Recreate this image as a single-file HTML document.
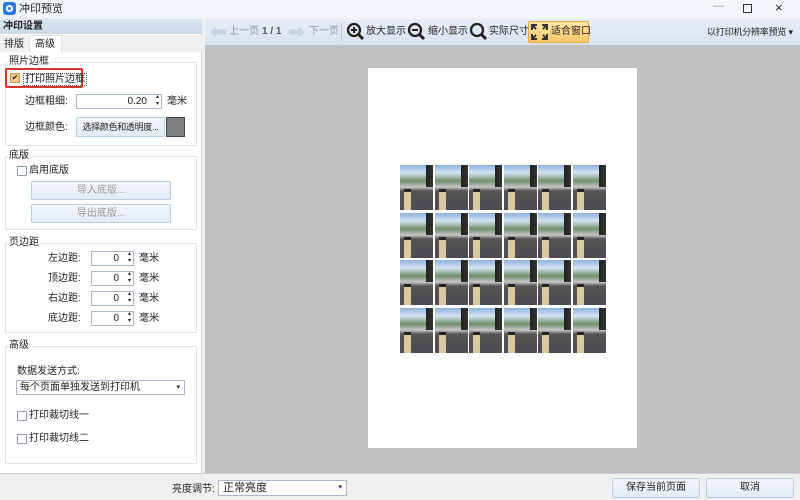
<!DOCTYPE html>
<html><head><meta charset="utf-8"><style>
*{margin:0;padding:0;box-sizing:border-box;white-space:nowrap}
body{width:800px;height:500px;overflow:hidden;background:#f0f0f0;font-family:"Liberation Sans","Noto Sans CJK SC",sans-serif;font-size:10px;line-height:12px;color:#222;position:relative}
.a{position:absolute}
.grp{position:absolute;border:1px solid #dde3ea;border-radius:2px}
.gl{position:absolute;top:-7px;left:8px;background:#fff;padding:0 1px;font-size:10px}
.cb{position:absolute;width:10px;height:10px;border:1px solid #8a9bb0;background:#fff;border-radius:1px}
.in{position:absolute;height:15px;border:1px solid #a9b8cc;background:#fff;text-align:right;font-size:10px;line-height:13px;padding-right:14px}
.in:after{content:"▴\A▾";white-space:pre;position:absolute;right:2px;top:-1px;font-size:6px;line-height:7px}
.btn{position:absolute;border:1px solid #b9cde3;background:linear-gradient(#f3f7fc,#e2ebf6);border-radius:2px;text-align:center;font-size:10px}
.ph{position:absolute;width:33px;height:45px;background:
linear-gradient(90deg,transparent 0,transparent 26px,#222 26px,#333 33px) 0 0/33px 22px no-repeat,
linear-gradient(180deg,#8fb2da 0,#d4e3f2 8px,#6f8f6a 16px,#c8c8c8 22px,#555 26px,#4b4b52 45px);}
.ph:after{content:"";position:absolute;left:4px;top:24px;width:7px;height:18px;background:#d8c9a2;border-top:3px solid #2a2420}
</style></head><body>
<div class="a" style="left:0;top:0;width:800px;height:18px;background:#f4f7fa"></div>
<div class="a" style="left:3px;top:2px;width:13px;height:13px;background:#2c7be5;border-radius:3px"><div class="a" style="left:3px;top:3px;width:7px;height:7px;border:2px solid #fff;border-radius:50%"></div></div>
<div class="a" style="left:19px;top:3px;font-size:11px">冲印预览</div>
<div class="a" style="left:713px;top:0;font-size:11px;color:#999">—</div>
<div class="a" style="left:743px;top:4px;width:9px;height:9px;border:1px solid #333"></div>
<div class="a" style="left:775px;top:0;font-size:13px;line-height:16px">×</div>
<div class="a" style="left:0;top:19px;width:202px;height:455px;background:#fff;border-right:1px solid #cfd8e3"></div>
<div class="a" style="left:0;top:19px;width:202px;height:15px;background:linear-gradient(#dbe6f2,#cbdaeb);font-weight:bold;font-size:10px;padding:2px 0 0 3px">冲印设置</div>
<div class="a" style="left:0;top:35px;width:202px;height:17px;background:#f0f0f0"></div>
<div class="a" style="left:4px;top:39px">排版</div>
<div class="a" style="left:29px;top:35px;width:33px;height:18px;background:#fff;border:1px solid #dde3ea;border-bottom:none;padding:3px 0 0 5px">高级</div>
<div class="grp" style="left:5px;top:62px;width:192px;height:84px"><span class="gl" style="left:2px">照片边框</span></div>
<div class="a" style="left:5px;top:68px;width:78px;height:20px;border:2px solid #d9342b;border-radius:2px"></div>
<div class="cb" style="left:10px;top:73px;background:#f6c98a;border-color:#c89b5a;font-size:8px;line-height:8px;text-align:center">✔</div>
<div class="a" style="left:23px;top:73px;border:1px dotted #555;padding:0 1px;line-height:11px">打印照片边框</div>
<div class="a" style="left:25px;top:96px">边框粗细:</div>
<div class="in" style="left:76px;top:94px;width:86px">0.20</div>
<div class="a" style="left:167px;top:96px">毫米</div>
<div class="a" style="left:25px;top:122px">边框颜色:</div>
<div class="btn" style="left:76px;top:117px;width:89px;height:20px;line-height:18px;font-size:9px;letter-spacing:-0.3px">选择颜色和透明度...</div>
<div class="a" style="left:166px;top:117px;width:19px;height:20px;background:#7f7f7f;border:1px solid #444"></div>
<div class="grp" style="left:5px;top:156px;width:192px;height:74px"><span class="gl" style="left:2px">底版</span></div>
<div class="cb" style="left:17px;top:166px"></div>
<div class="a" style="left:29px;top:165px">启用底版</div>
<div class="btn" style="left:31px;top:181px;width:140px;height:19px;line-height:17px;color:#999">导入底版...</div>
<div class="btn" style="left:31px;top:204px;width:140px;height:19px;line-height:17px;color:#999">导出底版...</div>
<div class="grp" style="left:5px;top:243px;width:192px;height:90px"><span class="gl" style="left:2px">页边距</span></div>
<div class="a" style="left:48px;top:253px">左边距:</div><div class="in" style="left:91px;top:251px;width:43px">0</div><div class="a" style="left:139px;top:253px">毫米</div>
<div class="a" style="left:48px;top:273px">顶边距:</div><div class="in" style="left:91px;top:271px;width:43px">0</div><div class="a" style="left:139px;top:273px">毫米</div>
<div class="a" style="left:48px;top:293px">右边距:</div><div class="in" style="left:91px;top:291px;width:43px">0</div><div class="a" style="left:139px;top:293px">毫米</div>
<div class="a" style="left:48px;top:313px">底边距:</div><div class="in" style="left:91px;top:311px;width:43px">0</div><div class="a" style="left:139px;top:313px">毫米</div>
<div class="grp" style="left:5px;top:346px;width:192px;height:118px"><span class="gl" style="left:2px">高级</span></div>
<div class="a" style="left:17px;top:366px">数据发送方式:</div>
<div class="a" style="left:16px;top:380px;width:169px;height:15px;border:1px solid #a9b8cc;background:#fff;padding:1px 3px;line-height:12px">每个页面单独发送到打印机<span style="position:absolute;right:4px;font-size:7px">▾</span></div>
<div class="cb" style="left:17px;top:411px"></div><div class="a" style="left:29px;top:410px">打印裁切线一</div>
<div class="cb" style="left:17px;top:434px"></div><div class="a" style="left:29px;top:433px">打印裁切线二</div>
<div class="a" style="left:205px;top:19px;width:595px;height:26px;background:linear-gradient(#e6eef7,#d9e4f0)"></div>
<div class="a" style="left:210px;top:27px;width:16px;height:10px;background:#c5d3e3;clip-path:polygon(0 50%,40% 0,40% 25%,100% 25%,100% 75%,40% 75%,40% 100%)"></div>
<div class="a" style="left:229px;top:26px;color:#8a95a3">上一页</div>
<div class="a" style="left:262px;top:26px;font-weight:bold;color:#555">1 / 1</div>
<div class="a" style="left:289px;top:27px;width:16px;height:10px;background:#c5d3e3;clip-path:polygon(100% 50%,60% 0,60% 25%,0 25%,0 75%,60% 75%,60% 100%)"></div>
<div class="a" style="left:309px;top:26px;color:#8a95a3">下一页</div>
<div class="a" style="left:341px;top:23px;width:1px;height:18px;background:#b8c6d6"></div>
<svg class="a" style="left:346px;top:22px" width="20" height="20"><circle cx="8" cy="8" r="6" fill="none" stroke="#222" stroke-width="2.3"/><line x1="12" y1="12" x2="17" y2="17" stroke="#222" stroke-width="3"/><line x1="5" y1="8" x2="11" y2="8" stroke="#222" stroke-width="2"/><line x1="8" y1="5" x2="8" y2="11" stroke="#222" stroke-width="2"/></svg>
<div class="a" style="left:366px;top:26px">放大显示</div>
<svg class="a" style="left:407px;top:22px" width="20" height="20"><circle cx="8" cy="8" r="6" fill="none" stroke="#222" stroke-width="2.3"/><line x1="12" y1="12" x2="17" y2="17" stroke="#222" stroke-width="3"/><line x1="5" y1="8" x2="11" y2="8" stroke="#222" stroke-width="2"/></svg>
<div class="a" style="left:428px;top:26px">缩小显示</div>
<svg class="a" style="left:469px;top:22px" width="20" height="20"><circle cx="8" cy="8" r="6" fill="none" stroke="#222" stroke-width="2.3"/><line x1="12" y1="12" x2="17" y2="17" stroke="#222" stroke-width="3"/></svg>
<div class="a" style="left:489px;top:26px">实际尺寸</div>
<div class="a" style="left:528px;top:21px;width:61px;height:22px;background:linear-gradient(#ffe6a8,#ffc766);border:1px solid #e3a94a;border-radius:2px"></div>
<svg class="a" style="left:531px;top:24px" width="17" height="16"><g stroke="#333" stroke-width="2" fill="none"><path d="M1 6V1H6M1 1L5 5"/><path d="M16 6V1H11M16 1L12 5"/><path d="M1 10V15H6M1 15L5 11"/><path d="M16 10V15H11M16 15L12 11"/></g></svg>
<div class="a" style="left:551px;top:26px">适合窗口</div>
<div class="a" style="left:707px;top:26px;font-size:9px;letter-spacing:-0.2px">以打印机分辨率预览 ▾</div>
<div class="a" style="left:205px;top:45px;width:595px;height:428px;background:#c0c0c0"></div>
<div class="a" style="left:368px;top:68px;width:269px;height:380px;background:#fff"></div>
<div id="g"></div>
<div class="a" style="left:0;top:473px;width:800px;height:27px;background:#f0f0f0;border-top:1px solid #c8d0da"></div>
<div class="a" style="left:172px;top:484px">亮度调节:</div>
<div class="a" style="left:218px;top:480px;width:129px;height:16px;border:1px solid #a9b8cc;background:#fff;padding:0 4px;font-size:11px;line-height:14px">正常亮度<span style="position:absolute;right:4px;font-size:7px">▾</span></div>
<div class="btn" style="left:612px;top:478px;width:88px;height:20px;line-height:18px">保存当前页面</div>
<div class="btn" style="left:706px;top:478px;width:88px;height:20px;line-height:18px">取消</div>
<script>
var h='';for(var r=0;r<4;r++)for(var c=0;c<6;c++)h+='<div class="ph" style="left:'+(400+c*34.5)+'px;top:'+(165+r*47.5)+'px"></div>';document.getElementById('g').innerHTML=h;
</script>
</body></html>
